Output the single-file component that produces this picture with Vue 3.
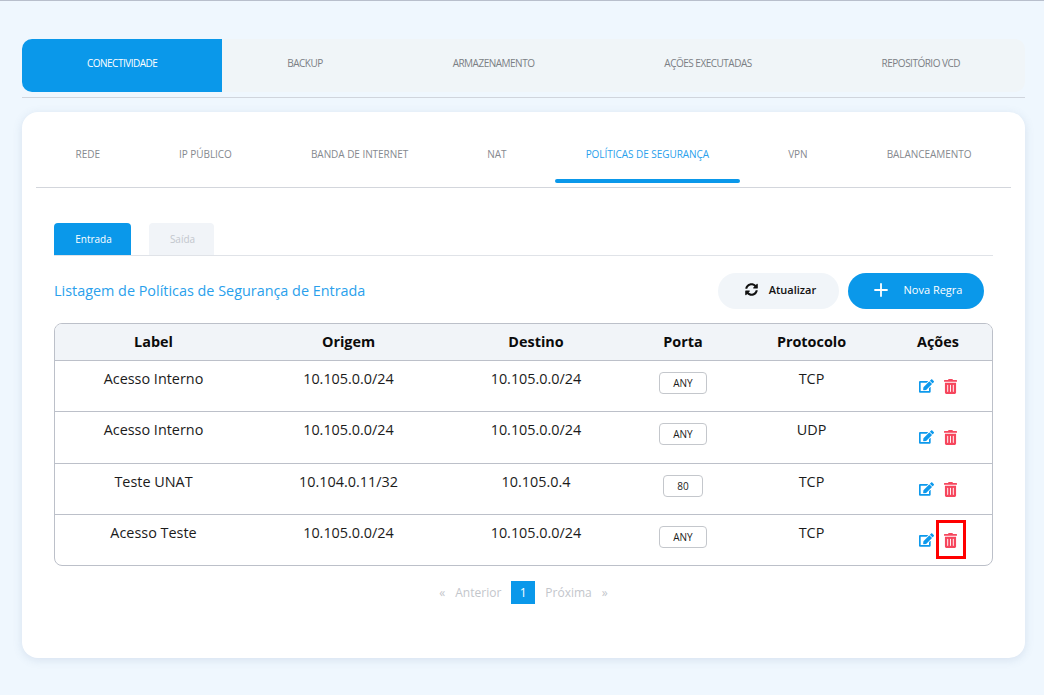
<script setup>
const topTabs = ['CONECTIVIDADE', 'BACKUP', 'ARMAZENAMENTO', 'AÇÕES EXECUTADAS', 'REPOSITÓRIO VCD']
const subTabs = ['REDE', 'IP PÚBLICO', 'BANDA DE INTERNET', 'NAT', 'POLÍTICAS DE SEGURANÇA', 'VPN', 'BALANCEAMENTO']

const rules = [
  { label: 'Acesso Interno', origem: '10.105.0.0/24', destino: '10.105.0.0/24', porta: 'ANY', protocolo: 'TCP' },
  { label: 'Acesso Interno', origem: '10.105.0.0/24', destino: '10.105.0.0/24', porta: 'ANY', protocolo: 'UDP' },
  { label: 'Teste UNAT', origem: '10.104.0.11/32', destino: '10.105.0.4', porta: '80', protocolo: 'TCP' },
  { label: 'Acesso Teste', origem: '10.105.0.0/24', destino: '10.105.0.0/24', porta: 'ANY', protocolo: 'TCP' }
]
</script>

<template>
  <div class="page">
    <nav class="top-tabs">
      <a v-for="(tab, i) in topTabs" :key="tab" class="top-tab" :class="{ active: i === 0 }">{{ tab }}</a>
    </nav>

    <section class="card">
      <nav class="sub-tabs">
        <a v-for="tab in subTabs" :key="tab" class="sub-tab" :class="{ active: tab.startsWith('POL') }">{{ tab }}</a>
      </nav>

      <div class="content">
        <div class="dir-tabs">
          <a class="dir-tab active">Entrada</a>
          <a class="dir-tab">Saída</a>
        </div>

        <div class="toolbar">
          <h2 class="title">Listagem de Políticas de Segurança de Entrada</h2>
          <button class="btn btn-light">
            <svg class="btn-icon" viewBox="0 0 512 512"><path fill="#111" d="M370.72 133.28C339.458 104.008 298.888 87.962 255.848 88c-77.458.068-144.328 53.178-162.791 126.85-1.344 5.363-6.122 9.15-11.651 9.15H24.103c-7.498 0-13.194-6.807-11.807-14.176C33.933 94.924 134.813 8 256 8c66.448 0 126.791 26.136 171.315 68.685L463.03 40.97C478.149 25.851 504 36.559 504 57.941V192c0 13.255-10.745 24-24 24H345.941c-21.382 0-32.09-25.851-16.971-40.971l41.75-41.749zM32 296h134.059c21.382 0 32.09 25.851 16.971 40.971l-41.75 41.75c31.262 29.273 71.835 45.319 114.876 45.28 77.418-.07 144.315-53.144 162.787-126.849 1.344-5.363 6.122-9.15 11.651-9.15h57.304c7.498 0 13.194 6.807 11.807 14.176C478.067 417.076 377.187 504 256 504c-66.448 0-126.791-26.136-171.315-68.685L48.97 471.03C33.851 486.149 8 475.441 8 454.059V320c0-13.255 10.745-24 24-24z"/></svg>
            Atualizar
          </button>
          <button class="btn btn-primary">
            <svg class="plus-icon" viewBox="0 0 14 14"><path d="M7 1v12M1 7h12" stroke="#fff" stroke-width="1.8" stroke-linecap="round" fill="none"/></svg>
            Nova Regra
          </button>
        </div>

        <div class="table-wrap">
          <table class="rules">
            <thead>
              <tr>
                <th class="c-label">Label</th>
                <th class="c-origem">Origem</th>
                <th class="c-destino">Destino</th>
                <th class="c-porta">Porta</th>
                <th class="c-proto">Protocolo</th>
                <th>Ações</th>
              </tr>
            </thead>
            <tbody>
              <tr v-for="(rule, i) in rules" :key="i">
                <td>{{ rule.label }}</td>
                <td>{{ rule.origem }}</td>
                <td>{{ rule.destino }}</td>
                <td><span class="port" :class="{ narrow: rule.porta !== 'ANY' }">{{ rule.porta }}</span></td>
                <td>{{ rule.protocolo }}</td>
                <td class="actions">
                  <div class="action-icons">
                    <svg class="icon-edit" viewBox="0 0 576 512"><path fill="#0d99ec" d="M402.6 83.2l90.2 90.2c3.8 3.8 3.8 10 0 13.8L274.4 405.6l-92.8 10.3c-12.4 1.4-22.9-9.1-21.5-21.5l10.3-92.8L388.8 83.2c3.8-3.8 10-3.8 13.8 0zm162-22.9l-48.8-48.8c-15.2-15.2-39.9-15.2-55.2 0l-35.4 35.4c-3.8 3.8-3.8 10 0 13.8l90.2 90.2c3.8 3.8 10 3.8 13.8 0l35.4-35.4c15.2-15.3 15.2-40 0-55.2zM384 346.2V448H64V128h229.8c3.2 0 6.2-1.3 8.5-3.5l40-40c7.6-7.6 2.2-20.5-8.5-20.5H48C21.5 64 0 85.5 0 112v352c0 26.5 21.5 48 48 48h352c26.5 0 48-21.5 48-48V306.2c0-10.7-12.9-16-20.5-8.5l-40 40c-2.2 2.3-3.5 5.3-3.5 8.5z"/></svg>
                    <span class="trash-box">
                      <svg class="icon-trash" viewBox="0 0 448 512"><path fill="#f6465d" d="M32 464a48 48 0 0 0 48 48h288a48 48 0 0 0 48-48V128H32zm272-256a16 16 0 0 1 32 0v224a16 16 0 0 1-32 0zm-96 0a16 16 0 0 1 32 0v224a16 16 0 0 1-32 0zm-96 0a16 16 0 0 1 32 0v224a16 16 0 0 1-32 0zM432 32H312l-9.4-18.7A24 24 0 0 0 281.1 0H166.8a23.72 23.72 0 0 0-21.4 13.3L136 32H16A16 16 0 0 0 0 48v32a16 16 0 0 0 16 16h416a16 16 0 0 0 16-16V48a16 16 0 0 0-16-16z"/></svg>
                      <i v-if="i === 3" class="highlight"></i>
                    </span>
                  </div>
                </td>
              </tr>
            </tbody>
          </table>
        </div>

        <div class="pager">
          <span>«</span>
          <span class="pager-word">Anterior</span>
          <span class="pager-current">1</span>
          <span class="pager-word">Próxima</span>
          <span>»</span>
        </div>
      </div>
    </section>
  </div>
</template>

<style>
html, body { margin: 0; background: #eff7fe; }
</style>

<style scoped>
.page {
  min-height: 695px;
  box-sizing: border-box;
  border-top: 1px solid #b8bfcc;
  padding: 38px 19px 0 22px;
  background: #eff7fe;
  font-family: "Open Sans", sans-serif;
}

/* abas superiores */
.top-tabs {
  display: flex;
  height: 53px;
  background: #f0f5f8;
  border-radius: 10px;
  margin-bottom: 5px;
  position: relative;
}
.top-tabs::after {
  content: '';
  position: absolute;
  left: 0;
  right: 0;
  bottom: -6px;
  height: 1px;
  background: #d0d5dd;
}
.top-tab {
  flex: 1 1 auto;
  padding: 0 20px 6px;
  display: flex;
  align-items: center;
  justify-content: center;
  font-size: 10px;
  letter-spacing: -0.5px;
  color: #7b7f85;
}
.top-tab.active {
  background: #0a98ea;
  color: #fff;
  border-radius: 10px 0 0 10px;
}

.card {
  margin-top: 20px;
  height: 546px;
  background: #fff;
  border-radius: 16px;
  box-shadow: 0 2px 10px rgba(90, 120, 160, 0.16);
  padding: 0 14px;
}

/* abas da conectividade */
.sub-tabs {
  display: flex;
  height: 75px;
  border-bottom: 1px solid #d3d6dc;
}
.sub-tab {
  flex: 1 1 auto;
  position: relative;
  padding: 8px 10px 0;
  display: flex;
  align-items: center;
  justify-content: center;
  font-size: 10px;
  letter-spacing: -0.05px;
  color: #85898f;
}
.sub-tab.active { color: #2a9fec; }
.sub-tab.active::after {
  content: '';
  position: absolute;
  left: 9px;
  right: 9px;
  bottom: 4px;
  height: 4px;
  border-radius: 2px;
  background: #0a98ea;
}

.content { padding: 35px 18px 0; }

.dir-tabs {
  display: flex;
  gap: 18px;
  height: 32px;
  border-bottom: 1px solid #e0e3e8;
}
.dir-tab {
  width: 77px;
  box-sizing: border-box;
  padding-left: 2px;
  display: flex;
  align-items: center;
  justify-content: center;
  font-size: 10px;
  color: #c3c7cd;
  background: #f1f4f8;
  border-radius: 4px 4px 0 0;
}
.dir-tab + .dir-tab { width: 65px; }
.dir-tab.active { background: #0a98ea; color: #fff; }

.toolbar {
  display: flex;
  align-items: center;
  height: 36px;
  margin-top: 17px;
  padding-right: 9px;
}
.title {
  flex: 1;
  margin: 0 0 1px;
  font-size: 14.4px;
  font-weight: 400;
  color: #2a9fec;
}
.btn {
  height: 36px;
  border: none;
  border-radius: 18px;
  padding: 0 0 3px 4px;
  display: flex;
  align-items: center;
  justify-content: center;
  font-family: inherit;
  font-size: 11px;
  font-weight: 600;
}
.btn-light { width: 121px; margin-right: 9px; background: #f1f5f9; color: #111; gap: 11px; }
.btn-primary { width: 136px; background: #0a98ea; color: #fff; gap: 16px; font-weight: 400; }
.btn-icon { width: 13px; height: 13px; }
.plus-icon { width: 14px; height: 14px; }

.table-wrap {
  margin-top: 14px;
  border: 1px solid #bcc0c9;
  border-radius: 8px;
  overflow: hidden;
}
.rules {
  width: 100%;
  table-layout: fixed;
  border-collapse: collapse;
  font-size: 14.4px;
  color: #1b1b1b;
  text-align: center;
}
.c-label { width: 197px; }
.c-origem { width: 193px; }
.c-destino { width: 182px; }
.c-porta { width: 112px; }
.c-proto { width: 145px; }
.rules th {
  box-sizing: border-box;
  height: 36px;
  padding: 0 0 1px;
  background: #f1f4f8;
  border-bottom: 1px solid #bcc0c9;
  font-weight: 700;
  color: #0b0b0b;
}
.rules td {
  height: 51px;
  box-sizing: border-box;
  padding: 8px 0 0;
  vertical-align: top;
  border-top: 1px solid #bcc0c9;
}
.rules tbody tr:first-child td { border-top: none; }
.rules tbody tr:nth-child(2) td { height: 52px; }
.port {
  display: inline-block;
  box-sizing: border-box;
  width: 48px;
  height: 22px;
  margin-top: 3px;
  line-height: 20px;
  border: 1px solid #c4c7cc;
  border-radius: 4px;
  font-size: 10px;
}
.port.narrow { width: 40px; }
.action-icons {
  display: flex;
  justify-content: center;
  align-items: center;
  gap: 10px;
  margin-top: 10px;
}
.icon-edit { width: 15px; height: 14px; }
.trash-box { position: relative; display: flex; }
.icon-trash { width: 13px; height: 15px; }
.highlight {
  position: absolute;
  left: -8px;
  top: -13px;
  width: 30px;
  height: 39px;
  box-sizing: border-box;
  border: 3px solid #ff0000;
}

.pager {
  display: flex;
  justify-content: center;
  align-items: center;
  gap: 10px;
  margin-top: 15px;
  height: 23px;
  font-size: 12px;
  color: #c3c6cb;
}
.pager-current {
  width: 24px;
  height: 23px;
  line-height: 23px;
  text-align: center;
  background: #0a98ea;
  color: #fff;
}
</style>
